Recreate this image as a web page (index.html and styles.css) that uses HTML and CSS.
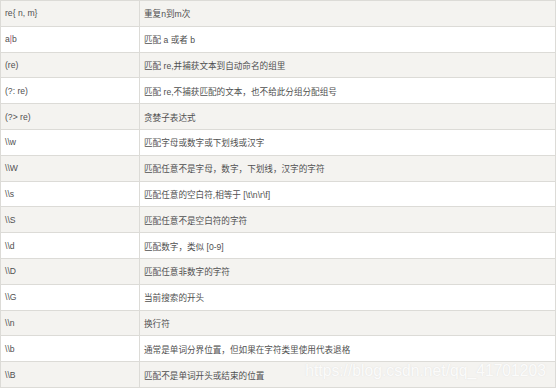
FILE: index.html
```html
<!DOCTYPE html>
<html>
<head>
<meta charset="utf-8">
<link rel="stylesheet" href="styles.css">
</head>
<body>
<div class="wrap">
<table class="regex">
<tr><td>re{ n, m}</td><td>重复n到m次</td></tr>
<tr><td>a<span class="pipe">|</span>b</td><td>匹配 a 或者 b</td></tr>
<tr><td>(re)</td><td>匹配 re,并捕获文本到自动命名的组里</td></tr>
<tr><td>(?: re)</td><td>匹配 re,不捕获匹配的文本，也不给此分组分配组号</td></tr>
<tr><td>(?&gt; re)</td><td>贪婪子表达式</td></tr>
<tr><td>\\w</td><td>匹配字母或数字或下划线或汉字</td></tr>
<tr><td>\\W</td><td>匹配任意不是字母，数字，下划线，汉字的字符</td></tr>
<tr><td>\\s</td><td>匹配任意的空白符,相等于 [\t\n\r\f]</td></tr>
<tr><td>\\S</td><td>匹配任意不是空白符的字符</td></tr>
<tr><td>\\d</td><td>匹配数字，类似 [0-9]</td></tr>
<tr><td>\\D</td><td>匹配任意非数字的字符</td></tr>
<tr><td>\\G</td><td>当前搜索的开头</td></tr>
<tr><td>\\n</td><td>换行符</td></tr>
<tr><td>\\b</td><td>通常是单词分界位置，但如果在字符类里使用代表退格</td></tr>
<tr><td>\\B</td><td>匹配不是单词开头或结束的位置</td></tr>
</table>
<div class="watermark">https://blog.csdn.net/qq_41701203</div>
</div>
</body>
</html>
```
FILE: styles.css
```css
html, body {
  margin: 0;
  padding: 0;
  background: #ffffff;
}
.wrap {
  position: relative;
  width: 556px;
  height: 388px;
}
.regex {
  width: 556px;
  height: 388px;
  border-collapse: collapse;
  table-layout: fixed;
  font-family: "Liberation Sans", "Noto Sans CJK SC", sans-serif;
  font-size: 8.6px;
  color: #505050;
}
.regex td {
  border: 1px solid #dcdbd7;
  padding: 0 0 0 4px;
  vertical-align: middle;
  white-space: nowrap;
}
.regex td:first-child {
  width: 134px;
}
.regex tr:nth-child(odd) td {
  background: #f4f3f0;
}
.regex tr:nth-child(even) td {
  background: #ffffff;
}
.pipe {
  color: #b5527f;
}
.watermark {
  position: absolute;
  right: 10px;
  top: 362px;
  font-family: "Liberation Sans", sans-serif;
  font-size: 15.7px;
  color: rgba(255, 255, 255, 0.9);
  text-shadow: 0 0 1px rgba(200, 200, 200, 0.5);
}
```
